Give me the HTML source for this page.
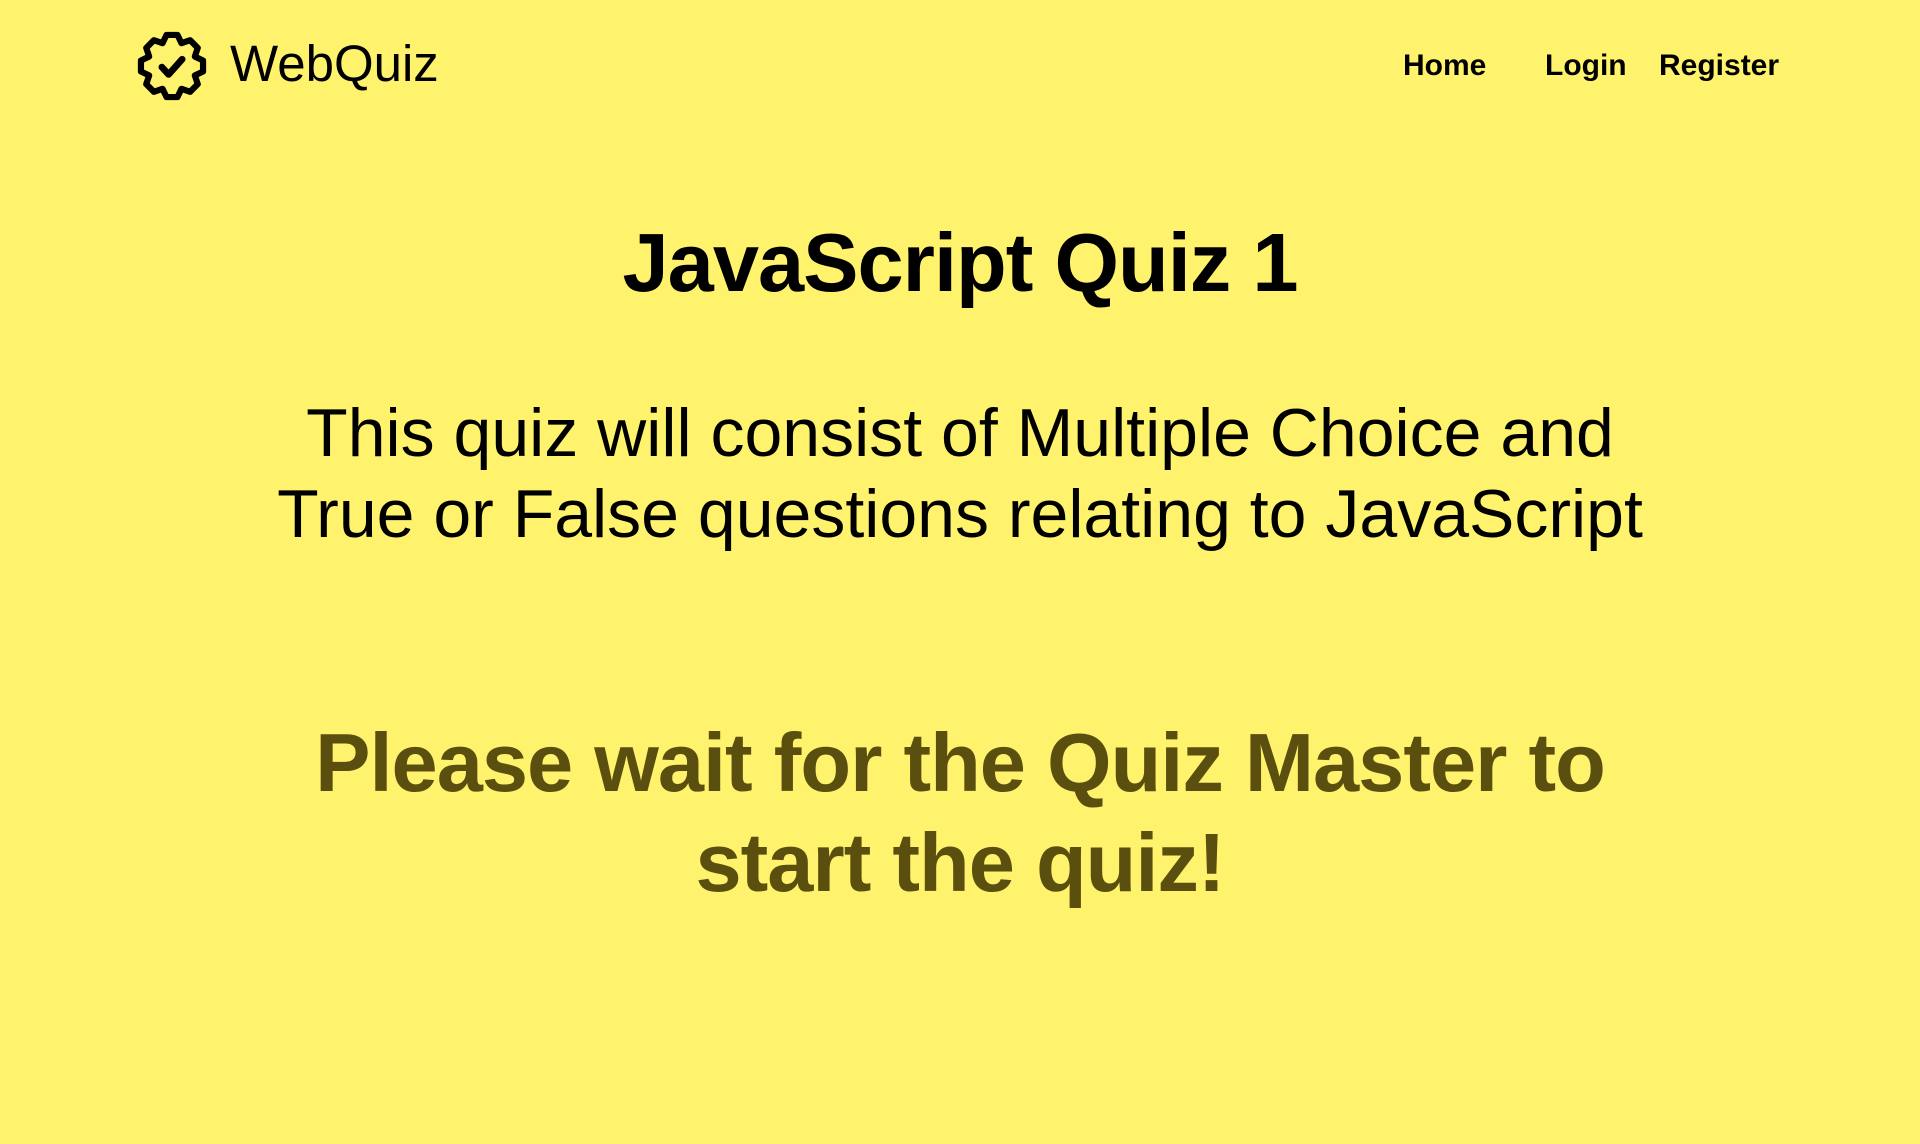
<!DOCTYPE html>
<html><head><meta charset="utf-8"><style>
html,body{margin:0;padding:0}
body{width:1920px;height:1144px;background:#fff26c;font-family:"Liberation Sans",Arial,sans-serif;color:#000;position:relative;overflow:hidden}
.logo{position:absolute;left:136px;top:30px}
.brand{position:absolute;left:230px;top:34px;font-size:51px;line-height:60px}
.nav{position:absolute;top:48px;font-size:30px;font-weight:bold;line-height:36px}
h1{position:absolute;left:0;right:0;top:213px;margin:0;text-align:center;font-size:83px;font-weight:bold;line-height:100px;letter-spacing:-1px}
.desc{position:absolute;left:0;right:0;top:393px;text-align:center;font-size:68px;line-height:81px}
.wait{position:absolute;left:0;right:0;top:713px;text-align:center;font-size:83px;font-weight:bold;line-height:100px;color:#5a4f0e;letter-spacing:-1px}
</style></head><body>
<svg class="logo" width="72" height="72" viewBox="0 0 64 64">
<polygon points="27.1,4.4 36.9,4.4 40.4,11.7 48.1,9.1 54.9,15.9 52.3,23.6 59.6,27.1 59.6,36.9 52.3,40.4 54.9,48.1 48.1,54.9 40.4,52.3 36.9,59.6 27.1,59.6 23.6,52.3 15.9,54.9 9.1,48.1 11.7,40.4 4.4,36.9 4.4,27.1 11.7,23.6 9.1,15.9 15.9,9.1 23.6,11.7" fill="none" stroke="#000" stroke-width="5.5" stroke-linejoin="round"/>
<polyline points="23,33 29,39.5 41,26" fill="none" stroke="#000" stroke-width="6" stroke-linecap="round" stroke-linejoin="round"/>
</svg>
<div class="brand">WebQuiz</div>
<div class="nav" style="left:1403px">Home</div>
<div class="nav" style="left:1545px">Login</div>
<div class="nav" style="left:1659px">Register</div>
<h1>JavaScript Quiz 1</h1>
<div class="desc">This quiz will consist of Multiple Choice and<br>True or False questions relating to JavaScript</div>
<div class="wait">Please wait for the Quiz Master to<br>start the quiz!</div>
</body></html>
